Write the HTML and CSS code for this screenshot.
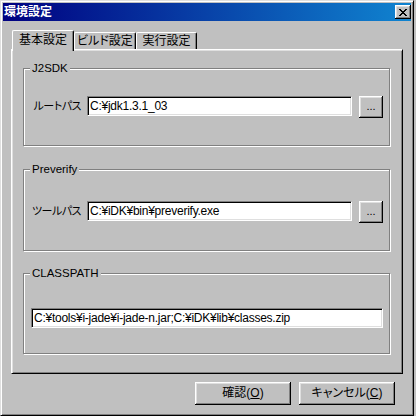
FILE: index.html
```html
<!DOCTYPE html>
<html lang="ja">
<head>
<meta charset="utf-8">
<title>環境設定</title>
<link rel="stylesheet" href="styles.css">
</head>
<body>
<div class="window">
  <div class="titlebar">
    <span class="title">環境設定</span>
    <div class="close">
      <svg width="8" height="7" viewBox="0 0 8 7" shape-rendering="crispEdges">
        <path fill="#000" d="M0 0h2v1H0zM6 0h2v1H6zM1 1h2v1H1zM5 1h2v1H5zM2 2h4v1H2zM3 3h2v1H3zM2 4h4v1H2zM1 5h2v1H1zM5 5h2v1H5zM0 6h2v1H0zM6 6h2v1H6z"/>
      </svg>
    </div>
  </div>
  <div class="main">
    <div class="tabs">
      <div class="tab active">基本設定</div>
      <div class="tab t2">ビルド設定</div>
      <div class="tab t3">実行設定</div>
    </div>
    <div class="panel">
      <div class="group g1">
        <div class="legend">J2SDK</div>
        <div class="row r1">
          <span class="lbl">ルートパス</span>
          <div class="field">C:¥jdk1.3.1_03</div>
          <div class="browse">...</div>
        </div>
      </div>
      <div class="group g2">
        <div class="legend">Preverify</div>
        <div class="row r2">
          <span class="lbl">ツールパス</span>
          <div class="field">C:¥iDK¥bin¥preverify.exe</div>
          <div class="browse">...</div>
        </div>
      </div>
      <div class="group g3">
        <div class="legend">CLASSPATH</div>
        <div class="row r3">
          <div class="field wide">C:¥tools¥i-jade¥i-jade-n.jar;C:¥iDK¥lib¥classes.zip</div>
        </div>
      </div>
    </div>
    <div class="actions">
      <div class="btn">確認(<u>O</u>)</div>
      <div class="btn">キャンセル(<u>C</u>)</div>
    </div>
  </div>
</div>
</body>
</html>
```

FILE: styles.css
```css
html, body {
  margin: 0;
  background: #c0c0c0;
}
body {
  font-family: "Liberation Sans", "Noto Sans CJK JP", sans-serif;
  font-size: 12px;
  font-feature-settings: "palt";
  color: #000;
}
.window {
  width: 414px;
  height: 416px;
  box-sizing: border-box;
  border: 1px solid;
  border-color: #dfdfdf #000 #000 #dfdfdf;
  box-shadow: inset 1px 1px #fff, inset -1px -1px #808080;
  padding: 2px;
  display: flex;
  flex-direction: column;
}
.titlebar {
  height: 18px;
  flex: none;
  background: linear-gradient(to right, #000080, #1084d0);
  display: flex;
  align-items: center;
  justify-content: space-between;
  padding: 0 0 0 1px;
}
.title {
  color: #fff;
  font-weight: bold;
  font-size: 12px;
  line-height: 14px;
}
.close {
  width: 16px;
  height: 14px;
  box-sizing: border-box;
  background: #c0c0c0;
  box-shadow: inset -1px -1px #000, inset 1px 1px #fff, inset -2px -2px #808080, inset 2px 2px #dfdfdf;
  display: flex;
  align-items: center;
  justify-content: center;
}
.close svg { display: block; }
.main {
  flex: 1;
  padding: 9px 8px 0 8px;
  display: flex;
  flex-direction: column;
}
.tabs {
  display: flex;
  align-items: flex-start;
  height: 19px;
  padding-left: 1px;
}
.tab {
  box-sizing: border-box;
  height: 17px;
  margin-top: 2px;
  border-top: 1px solid #fff;
  border-left: 1px solid #fff;
  border-right: 1px solid #000;
  border-radius: 2px 2px 0 0;
  box-shadow: inset -1px 0 #808080;
  text-align: center;
  font-size: 12px;
  line-height: 14px;
  padding-top: 1px;
  background: #c0c0c0;
}
.tab.active {
  width: 62px;
  height: 21px;
  margin-top: 0;
  padding-top: 2px;
  position: relative;
  z-index: 1;
}
.tab.t2 { width: 62px; }
.tab.t3 { width: 61px; }
.panel {
  height: 325px;
  box-sizing: border-box;
  border: 1px solid;
  border-color: #fff #000 #000 #fff;
  box-shadow: inset 1px 1px #dfdfdf, inset -1px -1px #808080;
  padding: 18px 12px 0 11px;
  display: flex;
  flex-direction: column;
}
.group {
  box-sizing: border-box;
  border: 1px solid #808080;
  box-shadow: inset 1px 1px #fff, 1px 1px #fff;
}
.g1 { height: 78px; }
.g2 { height: 82px; margin-top: 23px; }
.g3 { height: 81px; margin-top: 22px; }
.legend {
  width: max-content;
  margin: -7px 0 0 6px;
  padding: 0 2px;
  background: #c0c0c0;
  font-size: 11.5px;
  line-height: 13px;
}
.row {
  display: flex;
  align-items: flex-start;
}
.r1 { margin-top: 21px; }
.r2 { margin-top: 25px; }
.r3 { margin-top: 28px; padding-left: 7px; }
.lbl {
  width: 57px;
  text-align: right;
  margin-right: 6px;
  line-height: 20px;
  font-size: 11px;
  letter-spacing: -0.5px;
  white-space: nowrap;
}
.field {
  width: 265px;
  height: 20px;
  box-sizing: border-box;
  background: #fff;
  border: 1px solid;
  border-color: #808080 #fff #fff #808080;
  box-shadow: inset 1px 1px #000, inset -1px -1px #dfdfdf;
  padding: 0 2px;
  font-size: 12px;
  letter-spacing: -0.25px;
  line-height: 18px;
  white-space: nowrap;
  overflow: hidden;
}
.field.wide { width: 352px; }
.browse {
  width: 24px;
  height: 22px;
  margin-left: 7px;
  box-sizing: border-box;
  box-shadow: inset -1px -1px #000, inset 1px 1px #fff, inset -2px -2px #808080, inset 2px 2px #dfdfdf;
  text-align: center;
  font-size: 11px;
  line-height: 20px;
}
.actions {
  display: flex;
  justify-content: flex-end;
  gap: 8px;
  margin-top: 8px;
  padding-right: 8px;
}
.btn {
  width: 96px;
  height: 23px;
  box-sizing: border-box;
  box-shadow: inset -1px -1px #000, inset 1px 1px #fff, inset -2px -2px #808080, inset 2px 2px #dfdfdf;
  text-align: center;
  font-size: 12px;
  line-height: 22px;
}
.btn u { text-underline-offset: 1px; }
```
